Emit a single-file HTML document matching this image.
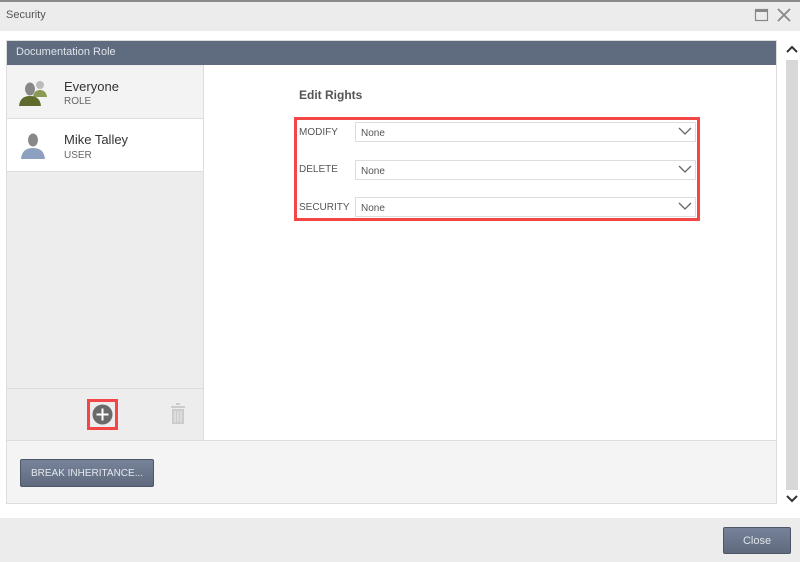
<!DOCTYPE html>
<html><head><style>
*{box-sizing:border-box;margin:0;padding:0}
body{width:800px;height:562px;background:#ececec;font-family:"Liberation Sans",sans-serif;position:relative;overflow:hidden;color:#444}
.abs{position:absolute}
</style></head><body>
<div class="abs" style="left:0;top:0;width:800px;height:2px;background:#8a8a8a"></div>
<div class="abs" style="left:6px;top:9px;font-size:11px;color:#555">Security</div>
<svg class="abs" style="left:754px;top:8px" width="16" height="15"><rect x="1.5" y="1.5" width="12" height="11" fill="none" stroke="#888" stroke-width="1.2"/><rect x="1.5" y="1.5" width="12" height="2.5" fill="#888"/></svg>
<svg class="abs" style="left:776px;top:7px" width="16" height="16"><path d="M2 2L14 14M14 2L2 14" stroke="#888" stroke-width="1.8"/></svg>
<div class="abs" style="left:0;top:31px;width:800px;height:487px;background:#fff"></div>
<div class="abs" style="left:786px;top:60px;width:12px;height:430px;background:#d8d8d8"></div>
<svg class="abs" style="left:785px;top:44px" width="14" height="10"><path d="M2 8L7 3L12 8" fill="none" stroke="#333" stroke-width="2"/></svg>
<svg class="abs" style="left:785px;top:494px" width="14" height="10"><path d="M2 2L7 7L12 2" fill="none" stroke="#333" stroke-width="2"/></svg>
<div class="abs" style="left:6px;top:40px;width:771px;height:464px;border:1px solid #ddd;background:#f4f4f4"></div>
<div class="abs" style="left:7px;top:41px;width:769px;height:24px;background:#5f6b7e;color:#dfe3ea;font-size:11px;padding:5px 9px">Documentation Role</div>
<div class="abs" style="left:7px;top:65px;width:197px;height:376px;background:#ededed;border-right:1px solid #ddd"></div>
<div class="abs" style="left:204px;top:65px;width:572px;height:376px;background:#fff"></div>
<div class="abs" style="left:7px;top:440px;width:769px;height:1px;background:#ddd"></div>
<div class="abs" style="left:7px;top:66px;width:196px;height:53px;background:#f3f3f3;border-bottom:1px solid #ddd"></div>
<div class="abs" style="left:7px;top:119px;width:196px;height:53px;background:#fff;border-bottom:1px solid #ddd"></div>
<div class="abs" style="left:7px;top:388px;width:196px;height:1px;background:#ddd"></div>
<svg class="abs" style="left:18px;top:78px" width="30" height="28"><circle cx="22" cy="7" r="4" fill="#bbb"/><path d="M15 19Q16 12 22 12Q28 12 29 19Z" fill="#8a9a52"/><ellipse cx="12" cy="11" rx="5" ry="6.5" fill="#888"/><path d="M1 28Q2 18 12 18Q22 18 23 28Z" fill="#5e6b2a"/></svg>
<div class="abs" style="left:64px;top:79px;font-size:13px;color:#333">Everyone</div>
<div class="abs" style="left:64px;top:96px;font-size:10px;color:#666">ROLE</div>
<svg class="abs" style="left:20px;top:131px" width="26" height="28"><ellipse cx="13" cy="9" rx="5" ry="6.5" fill="#888"/><path d="M1 28Q2 17 13 17Q24 17 25 28Z" fill="#8ea0bf"/></svg>
<div class="abs" style="left:64px;top:132px;font-size:13px;color:#333">Mike Talley</div>
<div class="abs" style="left:64px;top:150px;font-size:10px;color:#666">USER</div>
<div class="abs" style="left:87px;top:399px;width:31px;height:31px;border:3px solid #f44646"></div>
<svg class="abs" style="left:92px;top:404px" width="21" height="21"><circle cx="10.5" cy="10.5" r="10" fill="#6a6a6a"/><path d="M10.5 4.5V16.5M4.5 10.5H16.5" stroke="#fff" stroke-width="2"/></svg>
<svg class="abs" style="left:170px;top:403px" width="16" height="22"><rect x="6" y="0" width="4" height="2" fill="#ccc"/><rect x="1" y="3" width="14" height="2" fill="#ccc"/><rect x="2" y="6" width="12" height="15" fill="#ccc"/><path d="M5 8V19M8 8V19M11 8V19" stroke="#eee" stroke-width="1"/></svg>
<div class="abs" style="left:299px;top:88px;font-size:12px;font-weight:bold;color:#555">Edit Rights</div>
<div class="abs" style="left:294px;top:117px;width:406px;height:104px;border:3px solid #f44646"></div>
<div class="abs" style="left:299px;top:127px;font-size:10px;color:#555">MODIFY</div>
<div class="abs" style="left:299px;top:164px;font-size:10px;color:#555">DELETE</div>
<div class="abs" style="left:299px;top:202px;font-size:10px;color:#555">SECURITY</div>
<div class="abs" style="left:355px;top:122px;width:341px;height:20px;border:1px solid #ddd;background:#fff;font-size:10px;color:#555;padding:5px 5px">None</div>
<div class="abs" style="left:355px;top:160px;width:341px;height:20px;border:1px solid #ddd;background:#fff;font-size:10px;color:#555;padding:5px 5px">None</div>
<div class="abs" style="left:355px;top:197px;width:341px;height:20px;border:1px solid #ddd;background:#fff;font-size:10px;color:#555;padding:5px 5px">None</div>
<svg class="abs" style="left:678px;top:127px" width="14" height="9"><path d="M1 1L7 7L13 1" fill="none" stroke="#666" stroke-width="1.3"/></svg>
<svg class="abs" style="left:678px;top:165px" width="14" height="9"><path d="M1 1L7 7L13 1" fill="none" stroke="#666" stroke-width="1.3"/></svg>
<svg class="abs" style="left:678px;top:202px" width="14" height="9"><path d="M1 1L7 7L13 1" fill="none" stroke="#666" stroke-width="1.3"/></svg>
<div class="abs" style="left:20px;top:459px;width:134px;height:28px;background:linear-gradient(#77839a,#5f6a7e);border:1px solid #4d5666;border-radius:2px;color:#e4e8ee;font-size:10px;text-align:center;line-height:27px">BREAK INHERITANCE...</div>
<div class="abs" style="left:723px;top:527px;width:68px;height:27px;background:linear-gradient(#77839a,#5f6a7e);border:1px solid #4d5666;border-radius:2px;color:#dfe3ea;font-size:11px;text-align:center;line-height:27px">Close</div>
</body></html>
